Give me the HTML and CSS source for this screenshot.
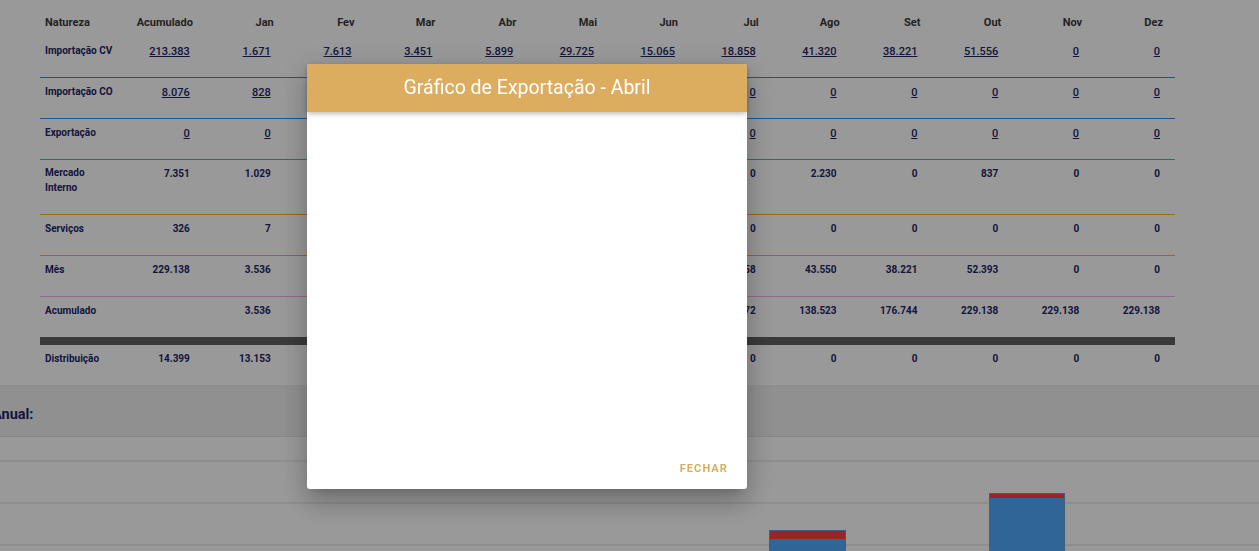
FILE: index.html
```html
<!DOCTYPE html>
<html lang="pt-BR">
<head>
<meta charset="utf-8">
<title>Gráfico de Exportação</title>
<link rel="stylesheet" href="styles.css">
</head>
<body>
<div class="page">
  <div class="table-wrap">
    <table class="grid">
      <colgroup>
        <col class="col-label">
        <col><col><col><col><col><col><col><col><col><col><col><col><col>
      </colgroup>
      <thead>
        <tr>
          <th class="th-label">Natureza</th>
          <th>Acumulado</th><th>Jan</th><th>Fev</th><th>Mar</th><th>Abr</th><th>Mai</th><th>Jun</th><th>Jul</th><th>Ago</th><th>Set</th><th>Out</th><th>Nov</th><th>Dez</th>
        </tr>
      </thead>
      <tbody>
        <tr class="r-cv">
          <td class="lbl">Importação CV</td>
          <td><a href="#">213.383</a></td><td><a href="#">1.671</a></td><td><a href="#">7.613</a></td><td><a href="#">3.451</a></td><td><a href="#">5.899</a></td><td><a href="#">29.725</a></td><td><a href="#">15.065</a></td><td><a href="#">18.858</a></td><td><a href="#">41.320</a></td><td><a href="#">38.221</a></td><td><a href="#">51.556</a></td><td><a href="#">0</a></td><td><a href="#">0</a></td>
        </tr>
        <tr class="r-co">
          <td class="lbl">Importação CO</td>
          <td><a href="#">8.076</a></td><td><a href="#">828</a></td><td></td><td></td><td></td><td></td><td></td><td><a href="#">0</a></td><td><a href="#">0</a></td><td><a href="#">0</a></td><td><a href="#">0</a></td><td><a href="#">0</a></td><td><a href="#">0</a></td>
        </tr>
        <tr class="r-exp">
          <td class="lbl">Exportação</td>
          <td><a href="#">0</a></td><td><a href="#">0</a></td><td></td><td></td><td></td><td></td><td></td><td><a href="#">0</a></td><td><a href="#">0</a></td><td><a href="#">0</a></td><td><a href="#">0</a></td><td><a href="#">0</a></td><td><a href="#">0</a></td>
        </tr>
        <tr class="r-mi">
          <td class="lbl lbl-two">Mercado Interno</td>
          <td>7.351</td><td>1.029</td><td></td><td></td><td></td><td></td><td></td><td>0</td><td>2.230</td><td>0</td><td>837</td><td>0</td><td>0</td>
        </tr>
        <tr class="r-sv">
          <td class="lbl">Serviços</td>
          <td>326</td><td>7</td><td></td><td></td><td></td><td></td><td></td><td>0</td><td>0</td><td>0</td><td>0</td><td>0</td><td>0</td>
        </tr>
        <tr class="r-mes">
          <td class="lbl">Mês</td>
          <td>229.138</td><td>3.536</td><td></td><td></td><td></td><td></td><td></td><td>18.858</td><td>43.550</td><td>38.221</td><td>52.393</td><td>0</td><td>0</td>
        </tr>
        <tr class="r-acc">
          <td class="lbl">Acumulado</td>
          <td></td><td>3.536</td><td></td><td></td><td></td><td></td><td></td><td>94.972</td><td>138.523</td><td>176.744</td><td>229.138</td><td>229.138</td><td>229.138</td>
        </tr>
        <tr class="r-dist">
          <td class="lbl">Distribuição</td>
          <td>14.399</td><td>13.153</td><td></td><td></td><td></td><td></td><td></td><td>0</td><td>0</td><td>0</td><td>0</td><td>0</td><td>0</td>
        </tr>
      </tbody>
    </table>
  </div>

  <section class="annual">
    <div class="annual-head"><h3 class="annual-title">Anual:</h3></div>
    <div class="chart">
      <div class="gridline"></div>
      <div class="gridline"></div>
      <div class="gridline"></div>
      <div class="bar bar-a"><div class="bar-red"></div></div>
      <div class="bar bar-b"><div class="bar-red"></div></div>
    </div>
  </section>
</div>

<div class="overlay"></div>

<div class="modal">
  <div class="modal-head">Gráfico de Exportação - Abril</div>
  <div class="modal-body"></div>
  <div class="modal-foot"><a class="btn-flat" href="#">Fechar</a></div>
</div>
</body>
</html>
```

FILE: styles.css
```css
* { box-sizing: border-box; }

html, body {
  margin: 0;
  padding: 0;
  width: 1259px;
  height: 551px;
  overflow: hidden;
  background: #ffffff;
  font-family: Roboto, "Noto Sans", Arial, sans-serif;
}

.page {
  width: 1259px;
}

.table-wrap {
  padding-left: 40px;
}

.grid {
  width: 1135px;
  table-layout: fixed;
  border-collapse: collapse;
  border-spacing: 0;
}

.col-label { width: 84px; }

.grid th {
  font-size: 11px;
  font-weight: 700;
  color: #3a3a3a;
  line-height: 15px;
  text-align: right;
  padding: 15px 12px 7px 5px;
  vertical-align: top;
  white-space: nowrap;
}

.grid th.th-label { text-align: left; }

.grid td {
  font-size: 10px;
  font-weight: 700;
  color: #1e2566;
  line-height: 15px;
  text-align: right;
  padding: 6px 15px 19px 5px;
  vertical-align: top;
  white-space: nowrap;
}

.grid td.lbl {
  text-align: left;
  white-space: normal;
  padding-right: 10px;
}

.grid td.lbl-two {
  line-height: 14.5px;
}

.grid a {
  font-size: 11px;
  font-weight: 500;
  line-height: 15px;
  color: #1e2566;
  text-decoration: underline;
  position: relative;
  top: 1px;
}

.r-co { border-top: 1px solid #2b8ff0; }
.r-exp { border-top: 1px solid #2b8ff0; }
.r-mi { border-top: 1px solid #3cc29a; }
.r-sv { border-top: 1px solid #ffb020; }
.r-mes { border-top: 1px solid #ffb020; }
.r-acc { border-top: 1px solid #f2b0f2; }
.r-dist { border-top: 8px solid #616161; }

.annual-head {
  height: 52px;
  background: #f0f0f0;
  border-bottom: 1px solid #e0e0e0;
  padding-top: 21px;
}

.annual-title {
  margin: 0 0 0 -8px;
  font-size: 14.5px;
  line-height: 18px;
  font-weight: 700;
  color: #1e2566;
}

.chart {
  position: relative;
  height: 140px;
  padding-top: 23px;
  display: flex;
  flex-direction: column;
  gap: 40px;
}

.gridline {
  height: 2px;
  background: #ececec;
}

.bar {
  position: absolute;
  background: #50aafc;
  border: 1px solid #6aa0d0;
  height: 120px;
}

.bar-red {
  background: #ff4040;
}

.bar-a {
  left: 769px;
  top: 93px;
  width: 77px;
}
.bar-a .bar-red { height: 8px; }

.bar-b {
  left: 989px;
  top: 56px;
  width: 76px;
}
.bar-b .bar-red { height: 4px; }

.overlay {
  position: fixed;
  inset: 0;
  background: rgba(0, 0, 0, 0.4);
}

.modal {
  position: fixed;
  left: 307px;
  top: 64px;
  width: 440px;
  height: 425px;
  background: #ffffff;
  border-radius: 3px;
  display: flex;
  flex-direction: column;
  box-shadow: 0 16px 24px 2px rgba(0,0,0,0.14), 0 6px 30px 5px rgba(0,0,0,0.12), 0 8px 10px -7px rgba(0,0,0,0.2);
}

.modal-head {
  height: 48px;
  background: #dcad5f;
  color: #ffffff;
  font-size: 19.5px;
  line-height: 48px;
  text-align: center;
  border-radius: 3px 3px 0 0;
  box-shadow: 0 2px 5px rgba(0,0,0,0.25);
  position: relative;
}

.modal-body {
  flex: 1;
}

.modal-foot {
  height: 42px;
  display: flex;
  align-items: center;
  justify-content: flex-end;
  padding-right: 20px;
}

.btn-flat {
  font-size: 11px;
  font-weight: 700;
  letter-spacing: 1.1px;
  text-transform: uppercase;
  color: #dcad5f;
  text-decoration: none;
  margin-right: -1px;
}
```
